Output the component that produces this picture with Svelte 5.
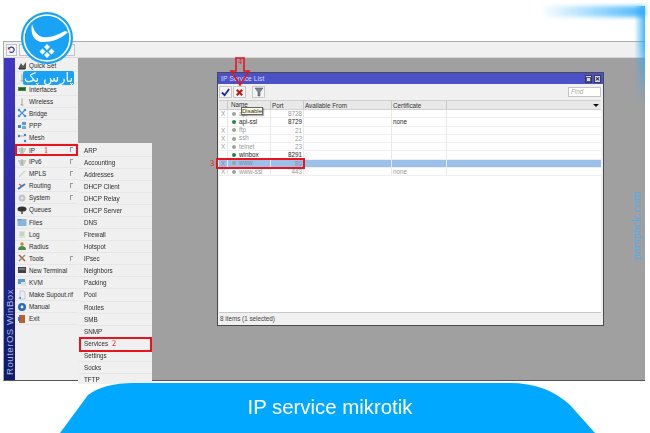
<script>
  const menu = [
    { label: 'Quick Set', icon: 'quick' },
    { label: 'CAPsMAN', icon: 'wifi' },
    { label: 'Interfaces', icon: 'iface' },
    { label: 'Wireless', icon: 'wifi' },
    { label: 'Bridge', icon: 'bridge' },
    { label: 'PPP', icon: 'ppp' },
    { label: 'Mesh', icon: 'mesh' },
    { label: 'IP', icon: 'ip', more: true, mark: '1' },
    { label: 'IPv6', icon: 'ip', more: true },
    { label: 'MPLS', icon: 'mpls', more: true },
    { label: 'Routing', icon: 'routing', more: true },
    { label: 'System', icon: 'system', more: true },
    { label: 'Queues', icon: 'queues' },
    { label: 'Files', icon: 'files' },
    { label: 'Log', icon: 'log' },
    { label: 'Radius', icon: 'radius' },
    { label: 'Tools', icon: 'tools', more: true },
    { label: 'New Terminal', icon: 'terminal' },
    { label: 'KVM', icon: 'kvm' },
    { label: 'Make Supout.rif', icon: 'supout' },
    { label: 'Manual', icon: 'manual' },
    { label: 'Exit', icon: 'exit' },
  ];

  const submenu = [
    'ARP', 'Accounting', 'Addresses', 'DHCP Client', 'DHCP Relay', 'DHCP Server', 'DNS',
    'Firewall', 'Hotspot', 'IPsec', 'Neighbors', 'Packing', 'Pool', 'Routes', 'SMB', 'SNMP',
    'Services', 'Settings', 'Socks', 'TFTP',
  ];

  const services = [
    { off: true, name: 'api', port: 8728, cert: '' },
    { off: false, name: 'api-ssl', port: 8729, cert: 'none' },
    { off: true, name: 'ftp', port: 21, cert: '' },
    { off: true, name: 'ssh', port: 22, cert: '' },
    { off: true, name: 'telnet', port: 23, cert: '' },
    { off: false, name: 'winbox', port: 8291, cert: '' },
    { off: true, name: 'www', port: 80, cert: '', selected: true },
    { off: true, name: 'www-ssl', port: 443, cert: 'none' },
  ];

  const icons = {
    quick: '<path d="M1 9l3-6 2 3 3-4v7z" fill="#555"/><path d="M2 9h6" stroke="#222"/>',
    wifi: '<path d="M5 3v6M3.5 9h3" stroke="#9aa88a" stroke-width="1"/><circle cx="5" cy="3" r="1" fill="#c5d4b4"/>',
    iface: '<rect x="1" y="3" width="8" height="4" fill="#3f8a3c"/><rect x="2" y="4" width="6" height="2" fill="#222" opacity=".5"/>',
    bridge: '<path d="M2 2l6 6M8 2l-6 6" stroke="#4a92d0" stroke-width="1.2"/><circle cx="2" cy="2" r="1.3" fill="#4a92d0"/><circle cx="8" cy="2" r="1.3" fill="#4a92d0"/><circle cx="2" cy="8" r="1.3" fill="#4a92d0"/><circle cx="8" cy="8" r="1.3" fill="#4a92d0"/>',
    ppp: '<rect x="1" y="5" width="3" height="3" fill="#3a86c8"/><rect x="5" y="2" width="4" height="3" fill="#5a9ad0"/><rect x="5" y="6" width="4" height="3" fill="#7aa6c8"/>',
    mesh: '<circle cx="2" cy="3" r="1.2" fill="#3a86c8"/><circle cx="8" cy="2" r="1.2" fill="#3a86c8"/><circle cx="8" cy="8" r="1.2" fill="#3a86c8"/><path d="M3 3h4" stroke="#88a" stroke-width=".6"/>',
    ip: '<path d="M1 4h8M5 2v6M3 8h4M2 6h6" stroke="#8aa085" stroke-width=".8"/>',
    mpls: '<path d="M2 8l6-6" stroke="#c5dcb8" stroke-width="1.4"/>',
    routing: '<path d="M1 8l7-5" stroke="#3a7ac8" stroke-width="2"/><path d="M2 3l3 2" stroke="#d05a4a" stroke-width="1.4"/>',
    system: '<circle cx="5" cy="5" r="3.5" fill="#c0c4c8"/><circle cx="5" cy="5" r="1.5" fill="#e4e4e4"/>',
    queues: '<ellipse cx="5" cy="4" rx="4.5" ry="2.6" fill="#333"/><path d="M5 6v3" stroke="#7a4a2a" stroke-width="1.6"/>',
    files: '<rect x="0.5" y="2" width="9" height="7" fill="#8ab4d8"/><rect x="0.5" y="2" width="4" height="1.5" fill="#6a9ac8"/>',
    log: '<rect x="2" y="2" width="6" height="7" fill="#d8e6d8"/><path d="M3 4h4M3 6h4" stroke="#9ab09a" stroke-width=".7"/>',
    radius: '<circle cx="5" cy="3" r="1.8" fill="#c88a3a"/><path d="M1 9c0-3 2-4 4-4s4 1 4 4z" fill="#4a8a4a"/>',
    tools: '<path d="M2 2l6 6" stroke="#c84a3a" stroke-width="1.4"/><path d="M8 2l-6 6" stroke="#7a9a6a" stroke-width="1.4"/>',
    terminal: '<rect x="1" y="2" width="8" height="6" fill="#444"/><rect x="2" y="3" width="6" height="2" fill="#777"/>',
    kvm: '<rect x="1" y="2" width="7" height="5" fill="#5a9ad0"/><rect x="4" y="5" width="5" height="4" fill="#d8e0e8"/>',
    supout: '<path d="M3 1h4l1 2v6H3z" fill="#e8eef4" stroke="#9ab" stroke-width=".5"/><path d="M1 8l3-1v2z" fill="#3a86c8"/>',
    manual: '<circle cx="5" cy="5" r="4" fill="#2a6ac0"/><circle cx="5" cy="5" r="1.4" fill="#fff"/>',
    exit: '<rect x="2" y="1" width="6" height="8" fill="#b8622a"/><rect x="1" y="3" width="2" height="4" fill="#3a7ac8"/>',
  };
</script>

<div class="page">
  <div class="top-space"></div>

  <div class="winbox">
    <div class="toolbar">
      <button class="tool" aria-label="Undo">
        <svg viewBox="0 0 10 10" width="9" height="9"><path d="M2.5 3.5a3 3 0 1 1 .2 3.8" fill="none" stroke="#2a3ab0" stroke-width="1.3"/><path d="M1 2v3h3z" fill="#c02020"/></svg>
      </button>
      <button class="tool wide" aria-label="Redo"></button>
    </div>

    <div class="body">
      <div class="brand"><span>RouterOS WinBox</span></div>

      <div class="menu">
        {#each menu as item}
          <div class="row" class:hot={item.label === 'IP'}>
            <svg class="ico" viewBox="0 0 10 10" width="10" height="10">{@html icons[item.icon]}</svg>
            <span class="text">{item.label}</span>
            {#if item.mark}<span class="mark">{item.mark}</span>{/if}
            {#if item.more}<span class="more"></span>{/if}
          </div>
        {/each}
      </div>

      <div class="desktop">
        <div class="submenu">
          {#each submenu as label}
            <div class="sub" class:hot={label === 'Services'}>
              {label}
              {#if label === 'Services'}<span class="mark">2</span>{/if}
            </div>
          {/each}
        </div>

        <section class="window">
          <header class="titlebar">
            <span>IP Service List</span>
            <div class="win-btns">
              <i class="win-btn"><b></b></i>
              <i class="win-btn">✕</i>
            </div>
          </header>

          <div class="win-tools">
            <button class="tb" aria-label="Enable">
              <svg viewBox="0 0 10 10" width="9" height="9"><path d="M1 5l3 3 5-7" fill="none" stroke="#1a2a9a" stroke-width="2"/></svg>
            </button>
            <button class="tb" aria-label="Disable">
              <svg viewBox="0 0 10 10" width="9" height="9"><path d="M2 2l6 6M8 2l-6 6" stroke="#c01818" stroke-width="2.4"/></svg>
            </button>
            <button class="tb filter" aria-label="Filter">
              <svg viewBox="0 0 10 10" width="10" height="10"><path d="M1 1h8L6 5v4H4V5z" fill="#7a8a94" stroke="#445" stroke-width=".5"/></svg>
            </button>
            <span class="find">Find</span>
          </div>

          <div class="table">
            <div class="tr head">
              <div class="c flag"></div>
              <div class="c name">Name</div>
              <div class="c port">Port</div>
              <div class="c from">Available From</div>
              <div class="c cert">Certificate</div>
              <div class="c rest"><span class="caret"></span></div>
            </div>
            {#each services as s}
              <div class="tr" class:off={s.off} class:selected={s.selected}>
                <div class="c flag">{s.off ? 'X' : ''}</div>
                <div class="c name"><i class="dot"></i>{s.name}</div>
                <div class="c port">{s.port}</div>
                <div class="c from"></div>
                <div class="c cert">{s.cert}</div>
                <div class="c rest"></div>
              </div>
            {/each}
          </div>

          <footer class="status">8 items (1 selected)</footer>

          <div class="tip">Disable</div>
        </section>

        <div class="box-three"></div>
        <span class="mark three">3</span>
        <span class="mark four">4</span>
        <svg class="arrow" viewBox="0 0 22 30" width="22" height="30">
          <path d="M7 1h8v13h5L11 28 2 14h5z" fill="none" stroke="#e8141e" stroke-width="1.6"/>
        </svg>
        <span class="watermark">parspack.com</span>
      </div>
    </div>
  </div>

  <div class="banner">
    <svg viewBox="0 0 650 50" width="650" height="50" aria-hidden="true">
      <path d="M60 50 L88 12 Q104 0 134 0 H510 Q546 0 570 22 L595 50 Z" fill="#00a8ff"/>
    </svg>
    <h1>IP service mikrotik</h1>
  </div>

  <div class="glow-top"></div>
  <div class="glow-right"></div>

  <div class="logo">
    <svg viewBox="0 0 54 54" width="54" height="54" aria-hidden="true">
      <circle cx="27" cy="27" r="26" fill="#1aa3f5"/>
      <circle cx="27" cy="27" r="23" fill="none" stroke="#fff" stroke-width="1.6"/>
      <path d="M12 13c-2 10 2 18 11 18 9 0 18-3 25-10l-3-1c-8 4-15 7-22 6-6-1-9-6-11-13z" fill="#fff"/>
      <path d="M27 33l3 3-3 3-3-3zM22.500 37.500l3 3-3 3-3-3zM31.500 37.500l3 3-3 3-3-3zM27 41l3 3-3 3-3-3z" fill="#fff"/>
    </svg>
    <span class="logo-name">پارس پک</span>
  </div>
</div>

<style>
  :global(body) {
    margin: 0;
    background: #fff;
  }

  .page {
    position: relative;
    width: 650px;
    height: 433px;
    overflow: hidden;
    background: #fff;
    font-family: "Liberation Sans", Arial, sans-serif;
    font-size: 6.3px;
    color: #2c2c2c;
  }

  .top-space {
    height: 41px;
  }

  .winbox {
    width: 642px;
    height: 340px;
    margin-left: 3px;
    box-sizing: border-box;
    border: 1px solid #a8adb2;
    border-bottom: 1px solid #555;
    border-right: 0;
    display: flex;
    flex-direction: column;
    filter: blur(0.35px);
  }

  .toolbar {
    height: 15px;
    background: #f0f0f0;
    display: flex;
    align-items: center;
    gap: 2px;
    padding-left: 2px;
    border-bottom: 1px solid #d8d8d8;
    flex: none;
  }

  .tool {
    width: 11px;
    height: 12px;
    padding: 0;
    border: 1px solid #c4c4c4;
    background: #f4f4f4;
    display: flex;
    align-items: center;
    justify-content: center;
  }

  .tool.wide {
    width: 56px;
  }

  .body {
    flex: 1;
    display: flex;
    min-height: 0;
  }

  .brand {
    width: 11px;
    flex: none;
    background: linear-gradient(#4038c4, #2a2aa0 45%, #0e1a6a);
    display: flex;
    align-items: flex-end;
    justify-content: center;
  }

  .brand span {
    writing-mode: vertical-rl;
    transform: rotate(180deg);
    color: #a9b6dc;
    font-size: 9.6px;
    letter-spacing: 0.5px;
    padding-top: 5px;
    white-space: nowrap;
  }

  .menu {
    width: 63px;
    flex: none;
    background: #f0f0f0;
    padding-top: 1.5px;
    box-sizing: border-box;
  }

  .row {
    height: 12.09px;
    box-sizing: border-box;
    display: flex;
    align-items: center;
    position: relative;
    padding-left: 2px;
    border-bottom: 1px solid #e6e6e6;
  }

  .ico {
    flex: none;
    margin-right: 2px;
  }

  .more {
    position: absolute;
    right: 5px;
    top: 3px;
    width: 2px;
    height: 4px;
    border-left: 1px solid #999;
    border-top: 1px solid #999;
  }

  .hot {
    outline: 2px solid #e8141e;
    outline-offset: -2px;
    border-bottom: 0;
  }

  .mark {
    font-family: "Liberation Serif", serif;
    color: #e8141e;
    font-size: 8px;
    margin-left: 9px;
  }

  .sub .mark {
    margin-left: 2px;
  }

  .desktop {
    position: relative;
    flex: 1;
    background: #a0a0a0;
  }

  .submenu {
    position: absolute;
    left: 0;
    top: 85px;
    width: 74px;
    height: 241px;
    padding: 1.5px 0 0 1px;
    box-sizing: border-box;
    background: #f0f0f0;
    overflow: hidden;
  }

  .sub {
    height: 12.09px;
    box-sizing: border-box;
    line-height: 12px;
    padding-left: 5px;
    border-bottom: 1px solid #e6e6e6;
    white-space: nowrap;
  }

  .sub.hot {
    height: 15px;
    margin: -1px 0 -2px;
    line-height: 14px;
  }

  .window {
    position: absolute;
    left: 139px;
    top: 14px;
    width: 387px;
    height: 254px;
    box-sizing: border-box;
    border: 1px solid #4a4a50;
    background: #f0f0f0;
    display: flex;
    flex-direction: column;
  }

  .titlebar {
    height: 11px;
    flex: none;
    background: #4b52c8;
    color: #d8dcf4;
    font-size: 6.8px;
    display: flex;
    align-items: center;
    justify-content: space-between;
    padding: 0 2px 0 3px;
  }

  .win-btns {
    display: flex;
    gap: 2px;
  }

  .win-btn {
    width: 7px;
    height: 8px;
    background: #d4d8e8;
    border: 1px solid #3a3a60;
    box-sizing: border-box;
    color: #111;
    font-size: 6px;
    font-style: normal;
    font-weight: bold;
    line-height: 6px;
    text-align: center;
    display: block;
    overflow: hidden;
  }

  .win-btn b {
    display: block;
    width: 3px;
    height: 3px;
    margin: 1px auto 0;
    border: 1px solid #555;
  }

  .win-tools {
    height: 16px;
    flex: none;
    display: flex;
    align-items: center;
    gap: 1px;
    padding-left: 1px;
  }

  .tb {
    width: 13px;
    height: 12px;
    padding: 0;
    border: 1px solid #c8c8c8;
    background: #f4f4f4;
    display: flex;
    align-items: center;
    justify-content: center;
  }

  .tb.filter {
    margin-left: 5px;
  }

  .find {
    margin-left: auto;
    margin-right: 2px;
    width: 33px;
    height: 10px;
    box-sizing: border-box;
    border: 1px solid #c4c4c4;
    background: #fff;
    color: #aaa;
    font-style: italic;
    line-height: 8px;
    padding-left: 2px;
  }

  .table {
    flex: 1;
    margin: 0 2px 0 1px;
    background: #fff;
    border-bottom: 1px solid #c8c8c8;
    position: relative;
  }

  .tr {
    display: flex;
    height: 8.3px;
    line-height: 8.3px;
    border-bottom: 1px solid #efefef;
    box-sizing: border-box;
    color: #1e1e1e;
  }

  .tr.head {
    height: 10px;
    line-height: 10px;
    background: #e8e8e8;
    border-top: 1px solid #d0d0d0;
    border-bottom: 1px solid #d0d0d0;
    color: #333;
  }

  .tr.off {
    color: #999;
  }

  .tr.selected {
    background: #9cc0ea;
    color: #8a8a9a;
  }

  .c {
    box-sizing: border-box;
    border-right: 1px solid #e8e8e8;
    padding: 0 1px;
    white-space: nowrap;
    overflow: hidden;
  }

  .head .c {
    border-right-color: #c8c8c8;
  }

  .flag {
    width: 9px;
    text-align: center;
  }

  .name {
    width: 43px;
    padding-left: 3px;
    display: flex;
    align-items: center;
  }

  .tr:not(.head) .name {
    padding-left: 4px;
  }

  .dot {
    width: 4px;
    height: 4px;
    border-radius: 50%;
    background: #1f8a4c;
    margin-right: 3px;
    flex: none;
  }

  .off .dot {
    background: #9aa59a;
  }

  .port {
    width: 33px;
    text-align: right;
  }

  .head .port {
    text-align: left;
  }

  .from {
    width: 88px;
  }

  .cert {
    width: 55px;
  }

  .rest {
    flex: 1;
    position: relative;
    border-right: 0;
  }

  .caret {
    position: absolute;
    right: 2px;
    top: 3px;
    width: 0;
    height: 0;
    border: 3px solid transparent;
    border-top: 3px solid #111;
    border-bottom: 0;
  }

  .status {
    height: 12px;
    flex: none;
    padding-left: 2px;
    line-height: 11px;
    color: #444;
  }

  .tip {
    position: absolute;
    left: 23px;
    top: 34px;
    width: 22px;
    height: 8px;
    background: #ffffe1;
    border: 1px solid #666;
    box-sizing: border-box;
    line-height: 6px;
    text-align: center;
    font-size: 6px;
    box-shadow: 1px 1px 1px rgba(0, 0, 0, 0.3);
  }

  .box-three {
    position: absolute;
    left: 138px;
    top: 100px;
    width: 89px;
    height: 11px;
    border: 2px solid #e8141e;
    box-sizing: border-box;
  }

  .three,
  .four {
    position: absolute;
    margin: 0;
  }

  .three {
    left: 132px;
    top: 101px;
  }

  .four {
    left: 160px;
    top: -1px;
  }

  .arrow {
    position: absolute;
    left: 151px;
    top: -1px;
  }

  .watermark {
    position: absolute;
    left: 551px;
    top: 133px;
    writing-mode: vertical-rl;
    transform: rotate(180deg);
    font-family: "Liberation Serif", serif;
    font-size: 12.5px;
    color: #55abe8;
    white-space: nowrap;
  }

  .banner {
    position: relative;
    margin-top: 2px;
    height: 50px;
  }

  .banner svg {
    display: block;
  }

  .banner h1 {
    position: absolute;
    left: 0;
    right: 0;
    top: 12px;
    margin: 0;
    text-align: center;
    font-weight: normal;
    font-size: 20.4px;
    line-height: 24px;
    color: #fff;
    transform: translateX(5px);
  }

  .glow-top {
    position: absolute;
    left: 540px;
    right: 5px;
    top: 6px;
    height: 11px;
    background: linear-gradient(90deg, rgba(40, 170, 250, 0), rgba(40, 170, 250, 0.85));
    filter: blur(2px);
  }

  .glow-right {
    position: absolute;
    left: 633px;
    right: 5px;
    top: 6px;
    height: 100px;
    background: linear-gradient(90deg, rgba(40, 170, 250, 0) 10%, rgba(40, 170, 250, 0.85));
    -webkit-mask-image: linear-gradient(#000 40%, transparent);
    mask-image: linear-gradient(#000 40%, transparent);
  }

  .logo {
    position: absolute;
    left: 20px;
    top: 11px;
    width: 54px;
  }

  .logo svg {
    display: block;
  }

  .logo-name {
    position: absolute;
    left: 3px;
    top: 60px;
    width: 51px;
    height: 14px;
    border-radius: 2px;
    background: #1aa3f5;
    color: #fff;
    font-family: "DejaVu Sans", sans-serif;
    font-size: 13px;
    line-height: 14px;
    text-align: center;
    white-space: nowrap;
  }
</style>
